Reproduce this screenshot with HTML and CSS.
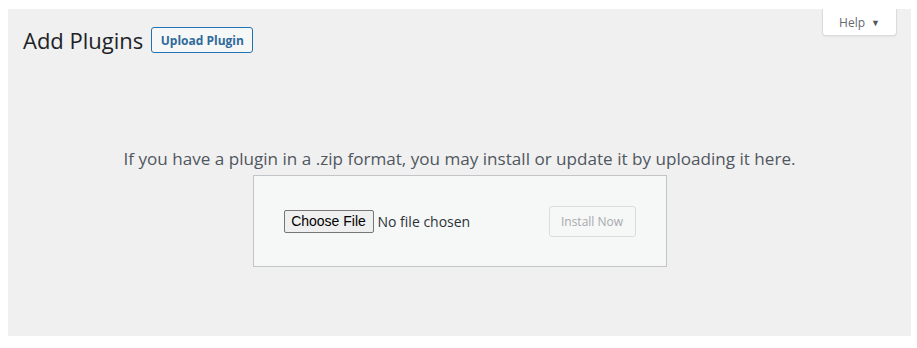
FILE: index.html
```html
<!DOCTYPE html>
<html lang="en">
<head>
<meta charset="utf-8">
<title>Add Plugins</title>
<link rel="stylesheet" href="styles.css">
</head>
<body>
<div class="page">
  <div class="help-tab">Help <span class="arrow">&#9660;</span></div>
  <div class="header">
    <h1 class="title">Add Plugins</h1>
    <span class="upload-btn">Upload Plugin</span>
  </div>
  <p class="install-help">If you have a plugin in a .zip format, you may install or update it by uploading it here.</p>
  <div class="form-wrap">
    <div class="upload-form">
      <div class="file-field">
        <span class="choose-btn">Choose File</span>
        <span class="no-file">No file chosen</span>
      </div>
      <span class="install-btn">Install Now</span>
    </div>
  </div>
</div>
</body>
</html>
```

FILE: styles.css
```css
html, body {
  margin: 0;
  padding: 0;
  background: #ffffff;
}
body {
  padding: 9px 6px 0 8px;
  font-family: "Open Sans", "Noto Sans", sans-serif;
}
.page {
  position: relative;
  background: #f0f0f1;
  height: 327px;
  box-sizing: border-box;
  padding-top: 16px;
}
.help-tab {
  position: absolute;
  top: 0;
  right: 14px;
  width: 75px;
  height: 27px;
  box-sizing: border-box;
  background: #ffffff;
  border: 1px solid #dcdcde;
  border-top: none;
  border-radius: 0 0 4px 4px;
  box-shadow: 0 1px 2px rgba(0,0,0,0.06);
  font-size: 12px;
  color: #646970;
  display: flex;
  align-items: center;
  justify-content: center;
  gap: 6px;
}
.help-tab .arrow {
  font-size: 9px;
  color: #50575e;
}
.header {
  display: flex;
  align-items: center;
  gap: 8px;
  padding-left: 15px;
}
.title {
  margin: 0;
  font-size: 22px;
  font-weight: 400;
  color: #1d2327;
  line-height: 30px;
}
.upload-btn {
  display: inline-flex;
  align-items: center;
  justify-content: center;
  box-sizing: border-box;
  width: 102px;
  height: 26px;
  border: 1px solid #2271b1;
  border-radius: 3px;
  background: #f6f7f7;
  color: #2f6a9a;
  font-size: 12px;
  font-weight: 700;
}
.install-help {
  margin: 92px 0 0;
  text-align: center;
  font-size: 17.1px;
  color: #50575e;
  line-height: 24px;
}
.form-wrap {
  display: flex;
  justify-content: center;
  margin-top: 4px;
}
.upload-form {
  width: 414px;
  height: 92px;
  box-sizing: border-box;
  border: 1px solid #c3c4c7;
  background: #f6f7f7;
  display: flex;
  align-items: center;
  justify-content: space-between;
  padding: 0 30px;
}
.file-field {
  display: flex;
  align-items: center;
  gap: 4px;
}
.choose-btn {
  display: inline-flex;
  align-items: center;
  justify-content: center;
  box-sizing: border-box;
  width: 90px;
  height: 23px;
  background: #efefef;
  border: 1px solid #767676;
  border-radius: 2px;
  font-family: "Liberation Sans", Arial, sans-serif;
  font-size: 14px;
  color: #000000;
}
.no-file {
  font-size: 14px;
  color: #2c3338;
}
.install-btn {
  display: inline-flex;
  align-items: center;
  justify-content: center;
  box-sizing: border-box;
  width: 87px;
  height: 31px;
  border: 1px solid #dcdcde;
  border-radius: 3px;
  background: #f6f7f7;
  color: #a7aaad;
  font-size: 12px;
}
```
